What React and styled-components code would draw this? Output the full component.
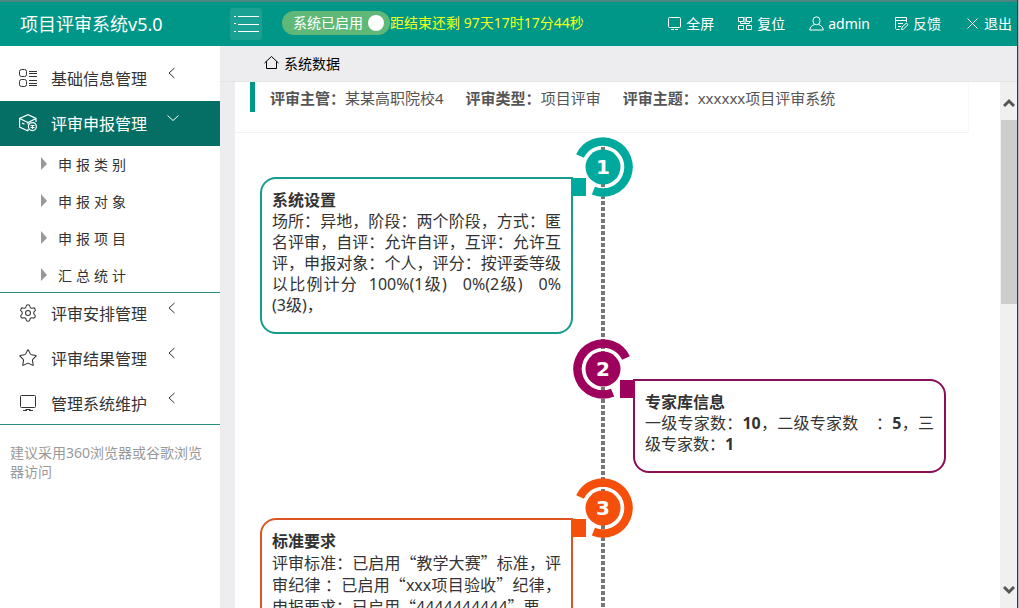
import React from 'react';

import styled, { createGlobalStyle } from 'styled-components';
import { Settings, Star } from 'lucide-react';

const GlobalStyle = createGlobalStyle`
  * {
    box-sizing: border-box;
  }

  body {
    margin: 0;
    background: #fff;
    color: #333;
    font-family: 'Noto Sans', 'Noto Sans CJK SC', sans-serif;
    font-size: 14px;
  }

  ul, h1, h2, p, dl, dd, ol {
    margin: 0;
    padding: 0;
    list-style: none;
  }

  a {
    color: inherit;
    text-decoration: none;
  }

  button {
    padding: 0;
    border: 0;
    background: none;
    color: inherit;
    font: inherit;
    cursor: pointer;
  }
`;

const Page = styled.div`
  display: flex;
  flex-direction: column;
  height: 100vh;
  overflow: hidden;
  border-right: 1px solid #a9bccb;
`;

const Frame = styled.div`
  display: flex;
  flex: 1;
  flex-direction: column;
  min-height: 0;
  border-right: 1px solid #1c3f63;
`;

const Header = styled.header`
  display: flex;
  align-items: center;
  height: 46px;
  flex: none;
  padding-right: 5px;
  border-top: 2px solid #4d8580;
  background: #009688;
  color: #fff;
`;

const Title = styled.h1`
  width: 230px;
  padding: 0 0 2px 20px;
  font-size: 18px;
  font-weight: 400;
`;

const MenuButton = styled.button`
  display: flex;
  align-items: center;
  justify-content: center;
  width: 32px;
  height: 32px;
  border-radius: 3px;
  background: #1aa194;
`;

const Switch = styled.label`
  display: flex;
  align-items: center;
  gap: 5px;
  height: 24px;
  margin: 0 0 2px 20px;
  padding: 0 6px 0 11px;
  border-radius: 12px;
  background: #5fb878;
  line-height: 24px;

  input {
    appearance: none;
    width: 16px;
    height: 16px;
    margin: 0;
    border-radius: 50%;
    background: #fff;
  }
`;

const Countdown = styled.p`
  padding-bottom: 4px;
  color: #f4ff1c;
`;

const Tools = styled.nav`
  display: flex;
  gap: 24px;
  margin-left: auto;
  padding-bottom: 2px;
`;

const Tool = styled.button`
  display: flex;
  align-items: center;
  gap: 4px;
`;

const Body = styled.div`
  display: flex;
  flex: 1;
  min-height: 0;
`;

const Sidebar = styled.aside`
  width: 220px;
  flex: none;
  padding-top: 10px;
`;

const MenuList = styled.ul`
  border-bottom: 1px solid #2a8c80;

  > li:last-child {
    margin-bottom: -2px;
  }
`;

const MenuLink = styled.a`
  display: flex;
  align-items: center;
  height: 45px;
  padding: 0 0 2px 19px;
  background: ${props => (props.$active ? '#056f65' : 'transparent')};
  color: ${props => (props.$active ? '#fff' : '#333')};
  font-size: 16px;

  > svg {
    flex: none;
  }

  span {
    padding: 0 20px 0 14px;
  }

  > svg:last-child {
    align-self: flex-start;
    margin-top: 11px;
  }
`;

const SubMenu = styled.ul`
  display: flex;
  flex-direction: column;
  gap: 1px;
  margin-bottom: -2px;
  box-shadow: inset 0 -1px #2a8c80;
`;

const SubLink = styled.a`
  display: flex;
  align-items: center;
  gap: 11px;
  height: 36px;
  padding: 0 0 1px 41px;
  letter-spacing: 4px;

  &::before {
    content: '';
    border: solid transparent;
    border-width: 7px 0 6px 6px;
    border-left-color: #999;
  }
`;

const Hint = styled.p`
  padding: 18px 10px;
  color: #999;
  line-height: 19px;
`;

const Main = styled.main`
  display: flex;
  flex: 1;
  flex-direction: column;
  min-width: 0;
  background: #ededef;
`;

const Crumb = styled.a`
  display: flex;
  align-items: center;
  gap: 5px;
  height: 36px;
  flex: none;
  padding: 0 0 2px 44px;
  border-bottom: 1px solid #e4e4e6;
  color: #000;
`;

const Workspace = styled.div`
  display: flex;
  flex: 1;
  min-height: 0;
  padding-left: 15px;
`;

const Content = styled.div`
  flex: 1;
  min-width: 0;
  overflow: hidden;
  background: #fff;
`;

const Summary = styled.div`
  height: 51px;
  margin-right: 31px;
  padding-left: 15px;
  border-right: 1px solid #f8f8f8;
  border-bottom: 1px solid #f2f2f2;
`;

const Facts = styled.dl`
  display: flex;
  gap: 22px;
  height: 30px;
  padding: 1px 0 0 15px;
  border-left: 5px solid #009688;
  color: #555;
  font-size: 15px;
  line-height: 30px;
  white-space: nowrap;

  div {
    display: flex;
  }

  dt {
    font-weight: 700;
  }
`;

const Timeline = styled.ol`
  display: flex;
  flex-direction: column;
  gap: 5px;
  margin: 4px 54px 0 25px;
  background: repeating-linear-gradient(#777 0 4px, #fff 4px 6px) center 10px / 4px 100% no-repeat;
`;

const Step = styled.li`
  display: grid;
  grid-template-columns: 1fr 60px 1fr;
`;

const Card = styled.section`
  position: relative;
  grid-column: ${props => (props.$right ? 3 : 1)};
  grid-row: 1;
  margin-top: 40px;
  padding: 10px 10px 16px;
  border: 2px solid ${props => props.$color};
  border-radius: ${props => (props.$right ? '0 16px 16px 16px' : '16px 0 16px 16px')};
  font-size: 16px;
  line-height: 21px;
  text-align: justify;

  /* tab that reaches out to the ring */
  &::after {
    content: '';
    position: absolute;
    top: -1px;
    ${props => (props.$right ? 'left' : 'right')}: -15px;
    width: 15px;
    height: 18px;
    background: ${props => props.$fill};
  }

  h2 {
    font-size: 16px;
    line-height: 22px;
  }
`;

const Ring = styled.svg`
  grid-column: 2;
  grid-row: 1;

  text {
    fill: #fff;
    font: 700 20px 'DejaVu Sans', sans-serif;
    text-anchor: middle;
  }
`;

const Keep = styled.span`
  white-space: nowrap;
`;

const Wide = styled.span`
  font-family: 'Noto Sans CJK SC', sans-serif;
`;

const Scrollbar = styled.div`
  display: flex;
  flex-direction: column;
  width: 17px;
  padding: 12px 0 9px;
  background: #f0f0f0;
`;

const ScrollButton = styled.button`
  display: flex;
  align-items: center;
  justify-content: center;
  height: 18px;
`;

const Track = styled.div`
  flex: 1;
  padding: 8px 0 0 1px;
`;

const Thumb = styled.div`
  height: 40%;
  background: #cdcdcd;
`;

const Icon = ({ size = 18, width = 1, box = 18, children }) => (
  <svg
    width={size}
    height={size}
    viewBox={`0 0 ${box} ${box}`}
    fill="none"
    stroke="currentColor"
    strokeWidth={width}
    aria-hidden="true"
  >
    {children}
  </svg>
);

const ListIcon = () => (
  <Icon>
    <rect x="0.5" y="0.5" width="7" height="7" rx="2" />
    <rect x="0.5" y="10.5" width="7" height="7" rx="2" />
    <path d="M10 2.5h8M10 4.5h8M10 7.5h8M10 11.5h8M10 14.5h8M10 16.5h8" />
  </Icon>
);

const BoxIcon = () => (
  <Icon width={1.2}>
    <path d="M9 17 0.600 13V4.500L9 0.700l8 3.800v3.500M0.600 4.500 9 8.500l8-4M9 8.500v2M9 15v2M3 9l2.500 1.200" />
    <circle cx="13.400" cy="12.600" r="4" />
    <path d="M11.500 11.500h4M11.500 13.500h4M13.500 11.500v3.500" />
  </Icon>
);

const ScreenIcon = () => (
  <Icon>
    <rect x="1.500" y="1.500" width="15" height="12" rx="1" />
    <path d="M4 16.500h4M10 16.500h4M6.500 15.500h5" />
  </Icon>
);

const ChevronIcon = ({ open }) => (
  <Icon size={12} box={12}>
    <path d={open ? 'M0.500 3.500 6 8.500l5.500-5' : 'M7.500 1 2 6l5.500 5'} />
  </Icon>
);

const menu = [
  { name: '基础信息管理', icon: <ListIcon /> },
  {
    name: '评审申报管理',
    icon: <BoxIcon />,
    items: ['申报类别', '申报对象', '申报项目', '汇总统计']
  },
  {
    name: '评审安排管理',
    icon: <Settings size={18} strokeWidth={1.3} viewBox="1 1 22 22" />
  },
  {
    name: '评审结果管理',
    icon: <Star size={18} strokeWidth={1.3} strokeLinejoin="miter" viewBox="1 1 22 22" />
  },
  { name: '管理系统维护', icon: <ScreenIcon /> }
];

const tools = [
  {
    name: '全屏',
    icon: (
      <Icon size={15} box={15}>
        <rect x="1.500" y="1.500" width="12" height="10" rx="1" />
        <path d="M4 13.500h3M8 13.500h3" />
      </Icon>
    )
  },
  {
    name: '复位',
    icon: (
      <Icon size={15} box={15}>
        <path d="M0.500 1.500h5v4h-5zM8.500 1.500h5v4h-5zM0.500 9.500h5v4h-5zM8.500 9.500h5v4h-5zM2.500 5.500v2h9v-2M7 1v6" />
      </Icon>
    )
  },
  {
    name: 'admin',
    icon: (
      <Icon size={15} box={15}>
        <ellipse cx="7.500" cy="4.800" rx="3.600" ry="4" />
        <path d="M5.500 8.500C3 9.500 1 11 0.700 14h13.600c-.3-3-2.300-4.500-4.800-5.500" />
      </Icon>
    )
  },
  {
    name: '反馈',
    icon: (
      <Icon size={15} box={15}>
        <path d="M5.500 13.500h-3l-1-1v-11h11v4.500M1.500 4.500h11M4 7.500h5M4 10.500h3M7.500 13.500l.500-2.500 4.500-4 1.500 1.700-4.500 4.300z" />
      </Icon>
    )
  },
  {
    name: '退出',
    icon: (
      <Icon size={15} box={15}>
        <path d="M2.500 2.500l10 10M12.500 2.500l-10 10" />
      </Icon>
    )
  }
];

const facts = [
  ['评审主管：', '某某高职院校4'],
  ['评审类型：', '项目评审'],
  ['评审主题：', 'xxxxxx项目评审系统']
];

const steps = [
  {
    title: '系统设置',
    color: '#179b8c',
    fill: '#00a99d',
    text: (
      <p>
        场所：异地，阶段：两个阶段，方式：匿名评审，自评：允许自评，互评：允许互评，申报对象：个人，评分：按评委等级以比例计分&nbsp;{' '}
        100%(1级)&nbsp;&nbsp; 0%(2级)&nbsp;&nbsp; 0%
        <wbr />
        <Keep>(3级)，</Keep>
      </p>
    )
  },
  {
    title: '专家库信息',
    color: '#8a0f57',
    fill: '#9e005d',
    text: (
      <p>
        一级专家数：<b>10</b>，二级专家数&nbsp;&nbsp;&nbsp;&nbsp;：<b>5</b>，三级专家数：<b>1</b>
      </p>
    )
  },
  {
    title: '标准要求',
    color: '#dd5522',
    fill: '#f4500c',
    text: (
      <p>
        评审标准：已启用<Wide>“</Wide>教学大赛<Wide>”</Wide>标准，评审纪律&nbsp;：已启用<Wide>“</Wide>
        xxx项目验收<Wide>”</Wide>纪律，申报要求：已启用<Wide>“</Wide>4444444444<Wide>”</Wide>要
        <br />
        求，
      </p>
    )
  }
];

const TimelineStep = ({ step, index }) => {
  const right = index % 2 === 1;
  return (
    <Step>
      <Ring width="60" height="60" viewBox="0 0 60 60">
        <path
          d={right ? 'M53 19A25.500 25.500 0 1 0 39.600 53.600' : 'M7 19A25.500 25.500 0 1 1 20.400 53.600'}
          fill="none"
          stroke={step.fill}
          strokeWidth="8.500"
        />
        <circle cx="30" cy="30" r="17.500" fill={step.fill} />
        <text x="30" y="37">
          {index + 1}
        </text>
      </Ring>
      <Card $right={right} $color={step.color} $fill={step.fill}>
        <h2>{step.title}</h2>
        {step.text}
      </Card>
    </Step>
  );
};

const App = () => (
  <Page>
    <GlobalStyle />
    <Frame>
      <Header>
        <Title>项目评审系统v5.0</Title>
        <MenuButton aria-label="菜单">
          <svg width="26" height="18" viewBox="0 0 26 18" stroke="#fff" aria-hidden="true">
            <path d="M1 1.500h2M1 8.500h2M1 16.500h2M5 1.500h21M5 9.500h21M5 16.500h21" />
          </svg>
        </MenuButton>
        <Switch>
          系统已启用
          <input type="checkbox" defaultChecked />
        </Switch>
        <Countdown>距结束还剩 97天17时17分44秒</Countdown>
        <Tools>
          {tools.map(tool => (
            <Tool key={tool.name}>
              {tool.icon}
              {tool.name}
            </Tool>
          ))}
        </Tools>
      </Header>
      <Body>
        <Sidebar>
          <MenuList>
            {menu.map(item => (
              <li key={item.name}>
                <MenuLink href="#" $active={!!item.items}>
                  {item.icon}
                  <span>{item.name}</span>
                  <ChevronIcon open={!!item.items} />
                </MenuLink>
                {item.items ? (
                  <SubMenu>
                    {item.items.map(name => (
                      <li key={name}>
                        <SubLink href="#">{name}</SubLink>
                      </li>
                    ))}
                  </SubMenu>
                ) : null}
              </li>
            ))}
          </MenuList>
          <Hint>建议采用360浏览器或谷歌浏览器访问</Hint>
        </Sidebar>
        <Main>
          <Crumb href="#">
            <Icon size={15} box={15}>
              <path d="M0.500 8 7.500 1.500l7 6.500M2.500 6.500v7h10v-7" />
            </Icon>
            系统数据
          </Crumb>
          <Workspace>
            <Content>
              <Summary>
                <Facts>
                  {facts.map(([label, value]) => (
                    <div key={label}>
                      <dt>{label}</dt>
                      <dd>{value}</dd>
                    </div>
                  ))}
                </Facts>
              </Summary>
              <Timeline>
                {steps.map((step, index) => (
                  <TimelineStep key={step.title} step={step} index={index} />
                ))}
              </Timeline>
            </Content>
            <Scrollbar>
              <ScrollButton aria-label="向上">
                <Icon size={12} box={12} width={3}>
                  <path d="M1 9l5-5 5 5" stroke="#555" />
                </Icon>
              </ScrollButton>
              <Track>
                <Thumb />
              </Track>
              <ScrollButton aria-label="向下">
                <Icon size={12} box={12} width={3}>
                  <path d="M1 3l5 5 5-5" stroke="#555" />
                </Icon>
              </ScrollButton>
            </Scrollbar>
          </Workspace>
        </Main>
      </Body>
    </Frame>
  </Page>
);

export default App;
